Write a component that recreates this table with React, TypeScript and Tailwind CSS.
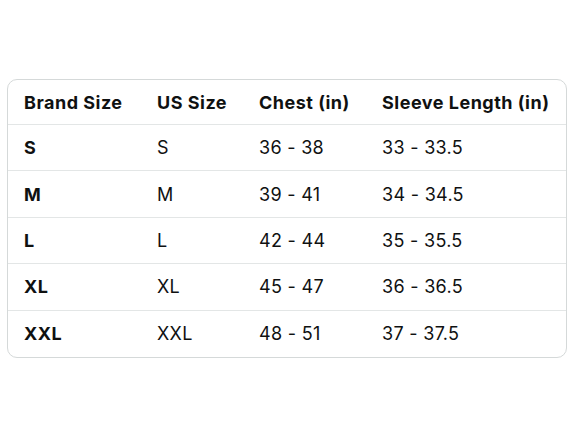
import React from "react";

const rows = [
  ["S", "S", "36 - 38", "33 - 33.5"],
  ["M", "M", "39 - 41", "34 - 34.5"],
  ["L", "L", "42 - 44", "35 - 35.5"],
  ["XL", "XL", "45 - 47", "36 - 36.5"],
  ["XXL", "XXL", "48 - 51", "37 - 37.5"],
];

export default function App() {
  return (
    <div className="w-[588px] h-[441px] bg-white pt-[79px] pl-[7px]" style={{ fontFamily: "Inter, 'Liberation Sans', sans-serif" }}>
      <div className="w-[560px] rounded-[10px] border border-[#d5d9d9] overflow-hidden text-[18px] text-[#0f1111] tracking-[0.3px]">
        <div className="grid grid-cols-[149px_102px_123px_1fr] h-[45px] items-center font-bold tracking-[0.5px] border-b border-[#e3e6e6]">
          <div className="pl-[16px]">Brand Size</div>
          <div>US Size</div>
          <div>Chest (in)</div>
          <div>Sleeve Length (in)</div>
        </div>
        {rows.map((r, i) => (
          <div
            key={i}
            className={`grid grid-cols-[149px_102px_123px_1fr] h-[46.4px] items-center ${i < rows.length - 1 ? "border-b border-[#e3e6e6]" : ""}`}
          >
            <div className="pl-[16px] font-bold tracking-[0.5px]">{r[0]}</div>
            <div>{r[1]}</div>
            <div>{r[2]}</div>
            <div>{r[3]}</div>
          </div>
        ))}
      </div>
    </div>
  );
}
